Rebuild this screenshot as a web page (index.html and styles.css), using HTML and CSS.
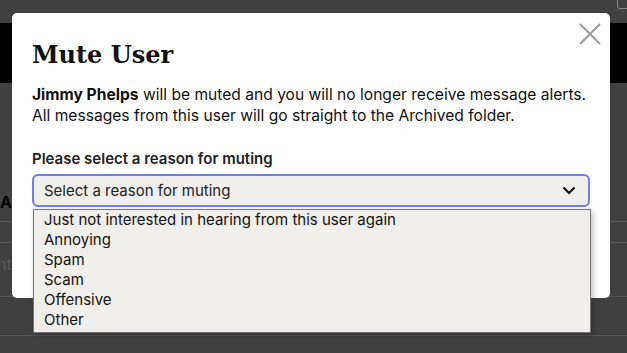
FILE: index.html
```html
<!DOCTYPE html>
<html lang="en">
<head>
<meta charset="UTF-8">
<meta name="viewport" content="width=device-width, initial-scale=1.0">
<title>Mute User</title>
<link rel="stylesheet" href="styles.css">
</head>
<body>
<div class="page">
  <div class="topbar">
    <span class="top-icon"></span>
  </div>
  <div class="header"></div>
  <div class="rows">
    <div class="row row-title"><span class="row-label">Ar</span></div>
    <div class="row row-empty"></div>
    <div class="row row-input"><span class="row-label">nte</span></div>
    <div class="row row-tall"></div>
  </div>

  <div class="modal">
    <button class="close" aria-label="Close">
      <svg width="22" height="22" viewBox="0 0 22 22">
        <path d="M1 1 L21 21 M21 1 L1 21" stroke="#9a9a9a" stroke-width="2" fill="none"/>
      </svg>
    </button>
    <h1>Mute User</h1>
    <p class="intro"><strong>Jimmy Phelps</strong> will be muted and you will no longer receive message alerts.<br>
      All messages from this user will go straight to the Archived folder.</p>
    <label class="field-label">Please select a reason for muting</label>
    <div class="select">
      <span>Select a reason for muting</span>
      <svg class="chevron" width="14" height="9" viewBox="0 0 14 9">
        <path d="M1.5 1.5 L7 7 L12.5 1.5" stroke="#111" stroke-width="2.2" fill="none"/>
      </svg>
    </div>
  </div>

  <ul class="options">
    <li>Just not interested in hearing from this user again</li>
    <li>Annoying</li>
    <li>Spam</li>
    <li>Scam</li>
    <li>Offensive</li>
    <li>Other</li>
  </ul>
</div>
</body>
</html>
```

FILE: styles.css
```css
body {
  margin: 0;
  font-family: Inter, "Liberation Sans", sans-serif;
  background-color: #404040;
  overflow: hidden;
}

.page {
  position: relative;
  width: 627px;
  height: 353px;
}

.topbar {
  height: 23px;
  display: flex;
  justify-content: flex-end;
}

.top-icon {
  width: 12px;
  height: 10px;
  margin-right: -4px;
  margin-top: -3px;
  border: 1px solid #8a8a8a;
  border-radius: 3px;
}

.header {
  height: 60px;
  background-color: #000;
}

.rows {
  padding-top: 108px;
}

.row {
  border-bottom: 1px solid #555;
  color: #000;
  font-size: 16px;
}

.row-label {
  display: block;
  width: 12px;
  white-space: nowrap;
}

.row-title {
  height: 30px;
  line-height: 22px;
  font-weight: bold;
}

.row-empty {
  height: 20px;
}

.row-input {
  height: 53px;
  line-height: 42px;
  color: #5a5a5a;
}

.row-input .row-label {
  margin-left: -3px;
}

.row-tall {
  height: 38px;
}

.modal {
  position: absolute;
  left: 12px;
  top: 13px;
  width: 558px;
  height: 285px;
  padding: 0 20px;
  background-color: #fff;
  border-radius: 5px;
}

.close {
  position: absolute;
  right: 9px;
  top: 10px;
  padding: 0;
  border: none;
  background: none;
}

.modal h1 {
  margin: 0;
  padding-top: 27px;
  font-family: "DejaVu Serif", serif;
  font-size: 24px;
  line-height: 30px;
  color: #111;
}

.intro {
  margin: 14px 0 0;
  font-size: 15.6px;
  line-height: 21px;
  color: #111;
}

.field-label {
  display: block;
  margin-top: 23px;
  font-size: 15px;
  font-weight: 600;
  color: #222;
}

.select {
  margin-top: 6px;
  height: 29px;
  padding: 0 10px;
  display: flex;
  align-items: center;
  justify-content: space-between;
  background-color: #f0efeb;
  border: 2px solid #6f7ef2;
  border-radius: 6px;
  font-size: 15px;
  color: #222;
}

.chevron {
  margin-right: 2px;
}

.options {
  position: absolute;
  left: 33px;
  top: 209px;
  width: 546px;
  margin: 0;
  padding: 0 0 2px 10px;
  list-style: none;
  background-color: #f1efeb;
  border: 1px solid #767676;
  box-shadow: 2px 2px 6px rgba(0, 0, 0, 0.25);
  font-size: 15px;
  line-height: 20px;
  color: #111;
}
```
